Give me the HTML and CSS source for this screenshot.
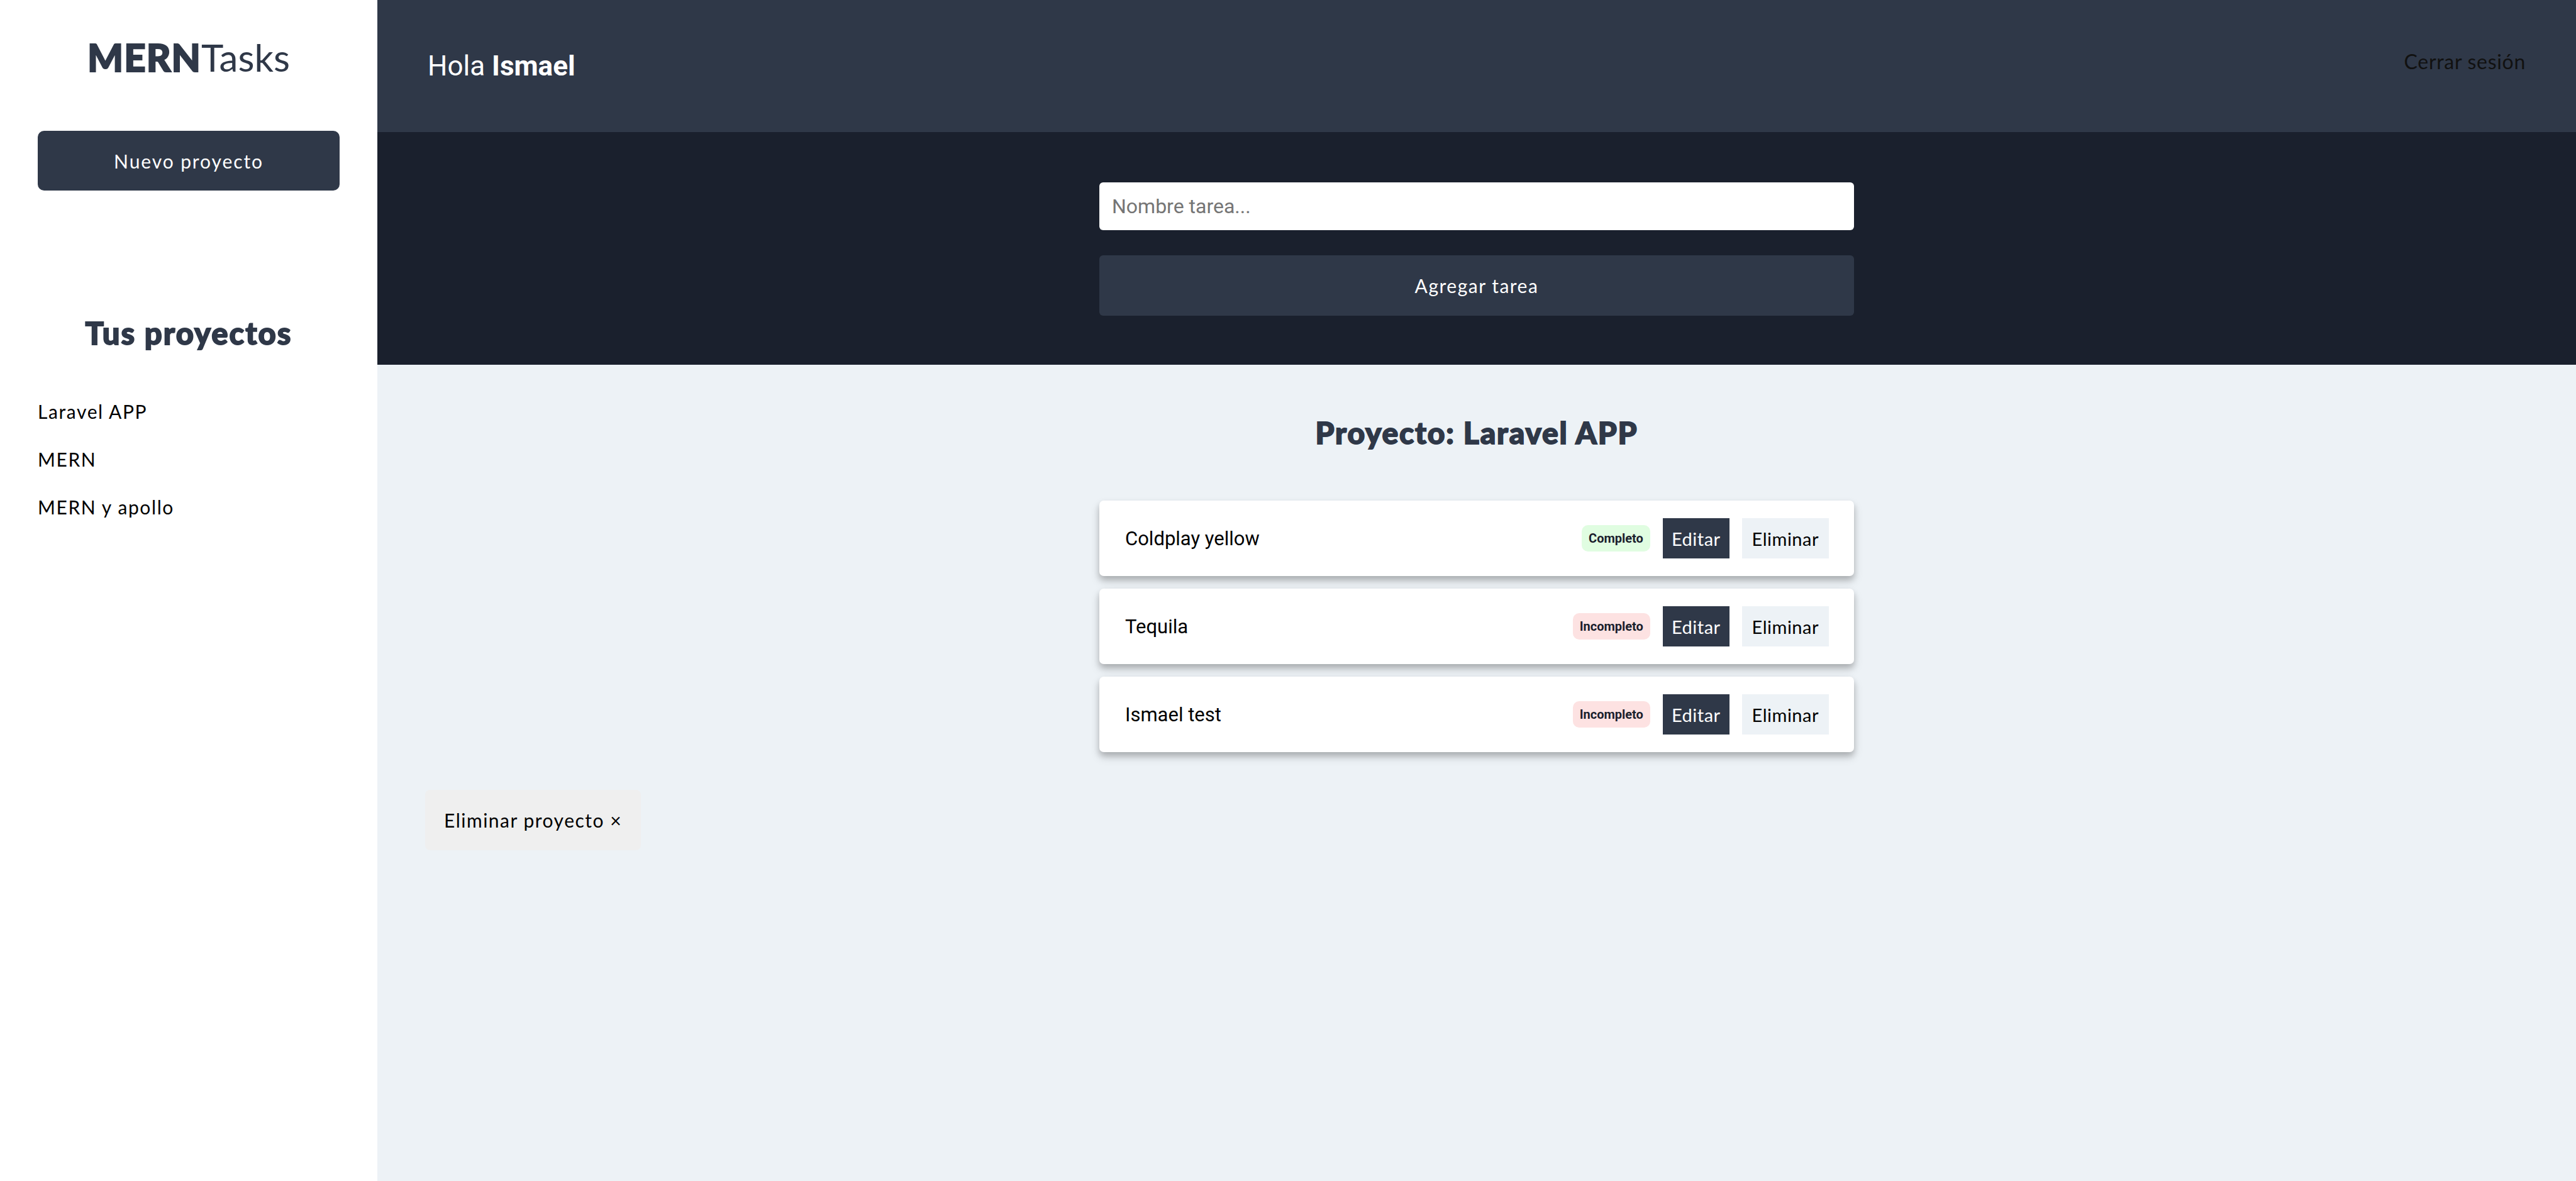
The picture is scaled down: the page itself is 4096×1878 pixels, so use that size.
FILE: index.html
```html
<!DOCTYPE html>
<html lang="es">
<head>
<meta charset="utf-8">
<title>MERNTasks</title>
<link rel="stylesheet" href="styles.css">
</head>
<body>
<aside class="sidebar">
  <h1 class="logo"><b>MERN</b>Tasks</h1>
  <button class="btn-new">Nuevo proyecto</button>
  <h2 class="projects-title">Tus proyectos</h2>
  <ul class="project-list">
    <li>Laravel APP</li>
    <li>MERN</li>
    <li>MERN y apollo</li>
  </ul>
</aside>
<div class="main">
  <header class="header">
    <p class="greeting">Hola <b>Ismael</b></p>
    <button class="logout">Cerrar sesión</button>
  </header>
  <section class="form-area">
    <form class="task-form">
      <input class="task-input" type="text" placeholder="Nombre tarea...">
      <button class="btn-add" type="button">Agregar tarea</button>
    </form>
  </section>
  <section class="content">
    <h2 class="project-title">Proyecto: Laravel APP</h2>
    <ul class="tasks">
      <li class="task">
        <span class="task-name">Coldplay yellow</span>
        <div class="actions">
          <span class="badge done">Completo</span>
          <button class="btn-edit">Editar</button>
          <button class="btn-del">Eliminar</button>
        </div>
      </li>
      <li class="task">
        <span class="task-name">Tequila</span>
        <div class="actions">
          <span class="badge pending">Incompleto</span>
          <button class="btn-edit">Editar</button>
          <button class="btn-del">Eliminar</button>
        </div>
      </li>
      <li class="task">
        <span class="task-name">Ismael test</span>
        <div class="actions">
          <span class="badge pending">Incompleto</span>
          <button class="btn-edit">Editar</button>
          <button class="btn-del">Eliminar</button>
        </div>
      </li>
    </ul>
    <button class="btn-delete-project">Eliminar proyecto &times;</button>
  </section>
</div>
</body>
</html>
```
FILE: styles.css
```css
* { box-sizing: border-box; margin: 0; padding: 0; }
html, body { height: 100%; }
body {
  font-family: Lato, "Liberation Sans", sans-serif;
  display: flex;
  min-height: 1878px;
  background: #edf2f6;
}
button { cursor: pointer; }

.sidebar {
  flex: 0 0 600px;
  width: 600px;
  background: #fff;
  padding: 55px 60px 0;
}
.logo {
  font: 400 60px/72px Lato, sans-serif;
  text-align: center;
  color: #2f3848;
}
.logo b {
  font-weight: 900;
  -webkit-text-stroke: 2px #2f3848;
  letter-spacing: 1px;
}
.btn-new {
  display: flex;
  align-items: center;
  justify-content: center;
  width: 100%;
  height: 95px;
  margin-top: 81px;
  background: #2f3848;
  color: #fff;
  border: 0;
  border-radius: 10px;
  font: 400 30px/1 Lato, sans-serif;
  letter-spacing: 1.9px;
}
.projects-title {
  margin-top: 197px;
  font: 900 49px/59px Lato, sans-serif;
  letter-spacing: 2px;
  -webkit-text-stroke: 1.8px #2f3848;
  text-align: center;
  color: #2f3848;
}
.project-list {
  list-style: none;
  margin-top: 57px;
}
.project-list li {
  font: 400 30px/76px Lato, sans-serif;
  letter-spacing: 1.6px;
  color: #000;
}

.main {
  flex: 1;
  display: flex;
  flex-direction: column;
}
.header {
  height: 210px;
  background: #2f3848;
  display: flex;
  align-items: center;
  justify-content: space-between;
  padding: 0 80px;
}
.greeting {
  font: 400 44px/1.2 Roboto, sans-serif;
  color: #fff;
}
.greeting b { font-weight: 700; }
.logout {
  background: none;
  border: 0;
  font: 400 32px/1.2 Lato, sans-serif;
  letter-spacing: 0.7px;
  color: #111;
  margin-bottom: 14px;
}

.form-area {
  background: #1a202d;
  padding: 80px 0 78px;
}
.task-form {
  width: 1200px;
  margin: 0 auto;
  display: flex;
  flex-direction: column;
  gap: 40px;
}
.task-input {
  height: 76px;
  border: 0;
  border-radius: 6px;
  padding: 0 20px;
  font: 400 32px Roboto, sans-serif;
  color: #000;
  background: #fff;
  outline: none;
}
.task-input::placeholder { color: #757575; }
.btn-add {
  height: 96px;
  border: 0;
  border-radius: 6px;
  background: #2f3848;
  color: #fff;
  font: 400 30px Lato, sans-serif;
  letter-spacing: 1.5px;
}

.content {
  flex: 1;
  padding: 79px 76px 0;
}
.project-title {
  font: 900 48px/58px Lato, sans-serif;
  letter-spacing: 1.8px;
  -webkit-text-stroke: 1.8px #2f3848;
  text-align: center;
  color: #2f3848;
}
.tasks {
  width: 1200px;
  margin: 79px auto 0;
  list-style: none;
  display: flex;
  flex-direction: column;
  gap: 20px;
}
.task {
  height: 120px;
  background: #fff;
  border-radius: 7px;
  box-shadow: 0 8px 16px rgba(0, 0, 0, 0.14), 0 6px 10px rgba(0, 0, 0, 0.18);
  display: flex;
  align-items: center;
  justify-content: space-between;
  padding: 0 40px 0 41px;
}
.task-name {
  font: 400 31px Roboto, sans-serif;
  color: #000;
}
.actions {
  display: flex;
  align-items: center;
  gap: 20px;
}
.badge {
  height: 42px;
  padding: 0 11px;
  border-radius: 10px;
  font: 700 20px/42px Roboto, sans-serif;
  color: #1a202d;
}
.badge.done { background: #e0fde1; }
.badge.pending { background: #fde2e2; }
.btn-edit, .btn-del {
  height: 64px;
  border: 0;
  font: 400 29px Lato, sans-serif;
  letter-spacing: 0.5px;
}
.btn-edit { background: #2f3848; color: #fff; padding: 0 14px; }
.btn-del { background: #edf2f6; color: #000; padding: 0 16px; }

.btn-delete-project {
  margin-top: 60px;
  height: 96px;
  padding: 0 30px;
  border: 0;
  border-radius: 8px;
  background: #efefef;
  font: 400 30px Lato, sans-serif;
  letter-spacing: 1.5px;
  color: #000;
}
```
